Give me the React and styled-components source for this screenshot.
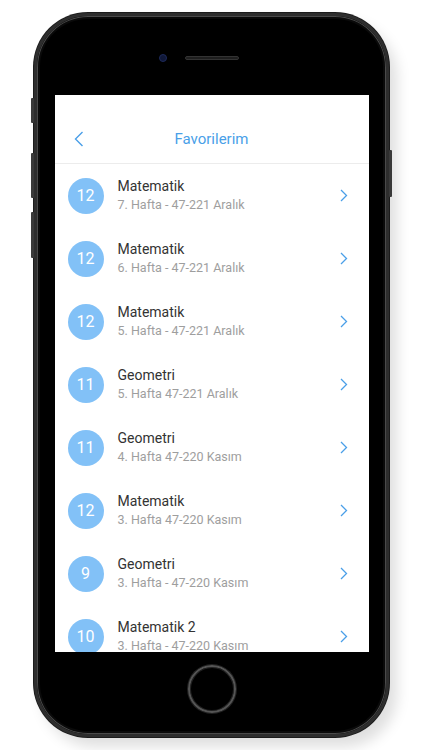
import React from 'react'
import styled, { createGlobalStyle } from 'styled-components'

const favorites = [
  { id: 1, grade: 12, lesson: 'Matematik', info: '7. Hafta - 47-221 Aralık' },
  { id: 2, grade: 12, lesson: 'Matematik', info: '6. Hafta - 47-221 Aralık' },
  { id: 3, grade: 12, lesson: 'Matematik', info: '5. Hafta - 47-221 Aralık' },
  { id: 4, grade: 11, lesson: 'Geometri', info: '5. Hafta 47-221 Aralık' },
  { id: 5, grade: 11, lesson: 'Geometri', info: '4. Hafta 47-220 Kasım' },
  { id: 6, grade: 12, lesson: 'Matematik', info: '3. Hafta 47-220 Kasım' },
  { id: 7, grade: 9, lesson: 'Geometri', info: '3. Hafta - 47-220 Kasım' },
  { id: 8, grade: 10, lesson: 'Matematik 2', info: '3. Hafta - 47-220 Kasım' },
]

const GlobalStyle = createGlobalStyle`
  body {
    margin: 0;
    background: #ffffff;
    font-family: Roboto, "Noto Sans", sans-serif;
  }
`

export default function App() {
  return (
    <Page>
      <GlobalStyle />
      <Phone>
        <SideButton side='left' top={82} height={25} />
        <SideButton side='left' top={137} height={45} />
        <SideButton side='left' top={196} height={46} />
        <SideButton side='right' top={134} height={47} />
        <TopBezel>
          <Camera />
          <Speaker />
          <span />
        </TopBezel>
        <Screen>
          <Header>
            <BackButton>
              <svg width='10' height='16' viewBox='0 0 10 16'>
                <path d='M8.5 1 L1.5 8 L8.5 15' fill='none' stroke='#4a9fe8' strokeWidth='1.4' />
              </svg>
            </BackButton>
            <Title>Favorilerim</Title>
          </Header>
          <List>
            {favorites.map((el) => (
              <Row key={el.id}>
                <Badge>{el.grade}</Badge>
                <TextBlock>
                  <Lesson>{el.lesson}</Lesson>
                  <Info>{el.info}</Info>
                </TextBlock>
                <svg width='8' height='13' viewBox='0 0 8 13'>
                  <path d='M1 1 L6.5 6.5 L1 12' fill='none' stroke='#4a9fe8' strokeWidth='1.3' />
                </svg>
              </Row>
            ))}
          </List>
        </Screen>
        <BottomBezel>
          <HomeButton />
        </BottomBezel>
      </Phone>
    </Page>
  )
}

const Page = styled.div`
  width: 422px;
  height: 750px;
  display: flex;
  justify-content: center;
  padding-top: 13px;
  box-sizing: border-box;
  overflow: hidden;
`

const Phone = styled.div`
  position: relative;
  width: 355px;
  height: 724px;
  box-sizing: border-box;
  border: 3px solid #2e2e2e;
  border-radius: 54px;
  background: #000;
  display: flex;
  flex-direction: column;
  padding: 0 17px 0 18px;
  box-shadow: inset 0 0 0 1px #4a4a4a, inset 0 0 0 3px #0a0a0a, 0 0 0 1px #1c1c1c,
    8px 10px 14px rgba(0, 0, 0, 0.13);
`

const SideButton = styled.div`
  position: absolute;
  ${(p) => (p.side === 'left' ? 'left: -6px;' : 'right: -6px;')}
  top: ${(p) => p.top}px;
  width: 3px;
  height: ${(p) => p.height}px;
  background: #3a3a3a;
  border-radius: 1px;
`

const TopBezel = styled.div`
  height: 79px;
  display: grid;
  grid-template-columns: 1fr auto 1fr;
  align-items: center;
  padding-top: 4px;
  box-sizing: border-box;
`

const Camera = styled.div`
  justify-self: end;
  margin-right: 18px;
  width: 6px;
  height: 6px;
  border-radius: 50%;
  background: #101838;
  border: 1px solid #1d2a5a;
`

const Speaker = styled.div`
  width: 54px;
  height: 4px;
  border-radius: 2px;
  background: #1e1e1e;
  border: 1px solid #333;
  box-sizing: border-box;
`

const Screen = styled.div`
  width: 314px;
  height: 557px;
  background: #fff;
  overflow: hidden;
  display: flex;
  flex-direction: column;
  flex-shrink: 0;
`

const Header = styled.div`
  position: relative;
  height: 69px;
  flex-shrink: 0;
  box-sizing: border-box;
  border-bottom: 1px solid #ececec;
  display: flex;
  align-items: flex-end;
  justify-content: center;
  padding-bottom: 14px;
`

const BackButton = styled.div`
  position: absolute;
  left: 19px;
  bottom: 16px;
  display: flex;
`

const Title = styled.span`
  font-size: 15px;
  color: #4a9fe8;
  line-height: 20px;
`

const List = styled.div`
  display: flex;
  flex-direction: column;
`

const Row = styled.div`
  height: 63px;
  flex-shrink: 0;
  display: flex;
  align-items: center;
  padding: 0 21px 0 13px;
`

const Badge = styled.div`
  width: 36px;
  height: 36px;
  border-radius: 50%;
  background: #82c1f7;
  color: #fff;
  font-size: 16px;
  display: flex;
  align-items: center;
  justify-content: center;
  flex-shrink: 0;
`

const TextBlock = styled.div`
  flex: 1;
  display: flex;
  flex-direction: column;
  margin-left: 14px;
  gap: 1px;
`

const Lesson = styled.span`
  font-size: 14px;
  color: #333;
  line-height: 18px;
`

const Info = styled.span`
  font-size: 12.5px;
  color: #9e9e9e;
  line-height: 18px;
`

const BottomBezel = styled.div`
  flex: 1;
  display: flex;
  align-items: center;
  justify-content: center;
  padding-bottom: 8px;
`

const HomeButton = styled.div`
  width: 44px;
  height: 44px;
  border-radius: 50%;
  border: 2px solid #555;
  box-shadow: 0 0 0 1px #222, inset 0 0 0 1px #222;
`
